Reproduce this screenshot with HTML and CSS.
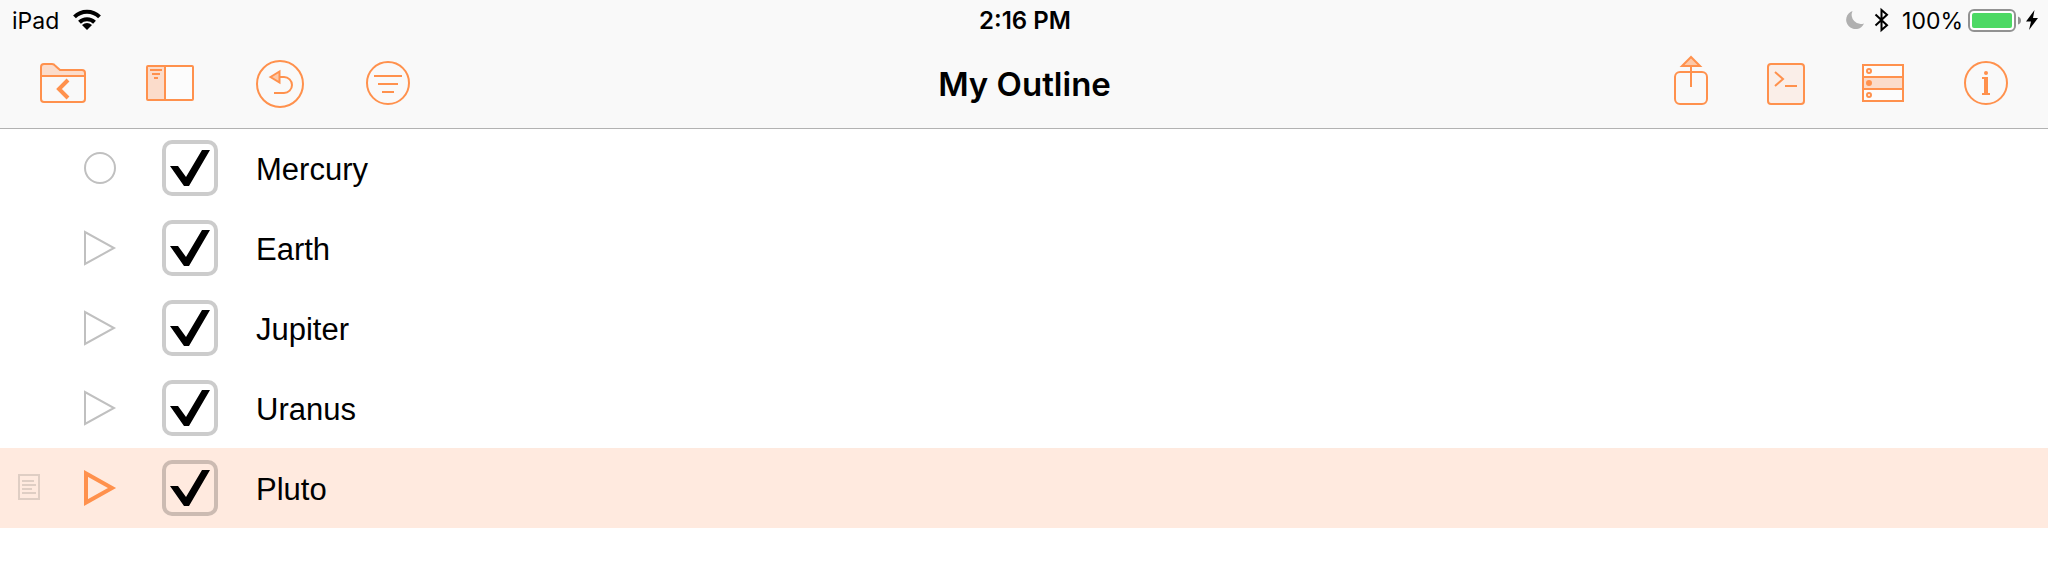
FILE: index.html
```html
<!DOCTYPE html>
<html lang="en">
<head>
<meta charset="utf-8">
<title>My Outline</title>
<link rel="stylesheet" href="styles.css">
</head>
<body>
<header class="header">
  <div class="status">
    <div class="status-left">
      <span>iPad</span>
      <svg class="wifi" width="28" height="20" viewBox="0 0 28 20" aria-hidden="true">
        <path d="M1.5 6.8A17.8 17.8 0 0 1 26.500 6.800M6.500 12.200A10.700 10.700 0 0 1 21.500 12.200" fill="none" stroke="#000" stroke-width="4"/>
        <path d="M14 20 9 15Q14 11 19 15Z"/>
      </svg>
    </div>
    <div class="status-time">2:16 PM</div>
    <div class="status-right">
      <svg class="moon" width="18" height="18" viewBox="0 0 18 18" aria-hidden="true"><path d="M6.500 0A9.300 9.300 0 1 0 18 12.500 9.300 9.300 0 0 1 6.500 0Z" fill="#b0b0b0"/></svg>
      <svg class="bluetooth" width="16" height="24" viewBox="0 0 16 24" aria-hidden="true"><path d="M1.500 6.500 13 17.200 7.500 22V2L13 6.800 1.500 17.500" fill="none" stroke="#000" stroke-width="2"/></svg>
      <span>100%</span>
      <svg class="battery" width="54" height="24" viewBox="0 0 54 24" aria-hidden="true">
        <rect x="1" y="1" width="46" height="21" rx="5" fill="#fff" stroke="#929292" stroke-width="2"/>
        <rect x="4" y="4" width="40" height="15" rx="2" fill="#4cd964"/>
        <path d="M50 7.500Q53 8.500 53 11.500T50 15.500Z" fill="#929292"/>
      </svg>
      <svg class="bolt" width="12" height="20" viewBox="0 0 12 20" aria-hidden="true"><path d="M8.500 0 0 11.500H5L3 20 12 8H7Z"/></svg>
    </div>
  </div>
  <div class="toolbar">
    <div class="tools tools-left">
      <button class="tool" type="button" aria-label="Documents">
        <svg viewBox="0 0 56 56" aria-hidden="true">
          <path class="tint" d="M6 22V13Q6 10 9 10H17Q19 10 20.500 12L25 16H47Q50 16 50 19V22Z"/>
          <path d="M6 22V13Q6 10 9 10H17Q19 10 20.500 12L25 16H47Q50 16 50 19V45Q50 48 47 48H9Q6 48 6 45ZM6 22H50"/>
          <path class="thick" d="M33 26 24 35 33 44"/>
        </svg>
      </button>
      <button class="tool" type="button" aria-label="Sidebar">
        <svg viewBox="0 0 56 56" aria-hidden="true">
          <path class="white" d="M22 12H50V46H22Z"/><path class="tint" d="M4 12H22V46H4Z"/>
          <rect x="4" y="12" width="46" height="34" rx="1"/><path d="M22 12V46M7 16H19M9 20H17M11 24H15"/>
        </svg>
      </button>
      <button class="tool" type="button" aria-label="Undo">
        <svg viewBox="0 0 56 56" aria-hidden="true">
          <circle cx="29" cy="30" r="23"/><path d="M28 23H33A8 8 0 0 1 33 39H23"/>
          <path class="tint-line" d="M19.500 23 28.500 17.500V28.500Z"/>
        </svg>
      </button>
      <button class="tool" type="button" aria-label="Filter">
        <svg viewBox="0 0 56 56" aria-hidden="true">
          <circle cx="29" cy="29" r="21"/><path d="M15 22H43M19 30H39M23 38H35"/>
        </svg>
      </button>
    </div>
    <h1 class="title">My Outline</h1>
    <div class="tools tools-right">
      <button class="tool" type="button" aria-label="Share">
        <svg viewBox="0 0 56 56" aria-hidden="true">
          <rect x="11" y="18" width="32" height="32" rx="5"/><path d="M27 12V33"/>
          <path class="tint-line" d="M27 3 18 12H36Z"/>
        </svg>
      </button>
      <button class="tool" type="button" aria-label="Console">
        <svg viewBox="0 0 56 56" aria-hidden="true">
          <rect class="pale" x="6" y="10" width="36" height="40" rx="3"/>
          <path d="M13 18 21 25 13 32M23 32H35"/>
        </svg>
      </button>
      <button class="tool" type="button" aria-label="View">
        <svg viewBox="0 0 56 56" aria-hidden="true">
          <path class="white" d="M3 11H43V47H3Z"/><path class="tint" d="M3 23H43V35H3Z"/>
          <path d="M3 11H43V47H3ZM3 23H43M3 35H43"/>
          <circle cx="9" cy="17" r="2"/><circle class="solid" cx="9" cy="29" r="2"/><circle cx="9" cy="41" r="2"/>
        </svg>
      </button>
      <button class="tool" type="button" aria-label="Inspector">
        <svg viewBox="0 0 56 56" aria-hidden="true">
          <circle cx="28" cy="29" r="21"/>
          <circle class="fill" cx="28" cy="19" r="2"/>
          <path class="fill" d="M24 23H30V39H32V41H24V39H26V25H24Z"/>
        </svg>
      </button>
    </div>
  </div>
</header>
<main>
  <ul class="outline">
    <li class="row">
      <span class="note"></span>
      <button class="handle" type="button" aria-label="Mercury row"><svg viewBox="0 0 32 36" aria-hidden="true"><circle cx="16" cy="18" r="15"/></svg></button>
      <input class="check" type="checkbox" id="mercury" checked>
      <label class="name" for="mercury">Mercury</label>
    </li>
    <li class="row">
      <span class="note"></span>
      <button class="handle" type="button" aria-label="Expand Earth"><svg viewBox="0 0 32 36" aria-hidden="true"><path d="M1 2V34L30 18Z"/></svg></button>
      <input class="check" type="checkbox" id="earth" checked>
      <label class="name" for="earth">Earth</label>
    </li>
    <li class="row">
      <span class="note"></span>
      <button class="handle" type="button" aria-label="Expand Jupiter"><svg viewBox="0 0 32 36" aria-hidden="true"><path d="M1 2V34L30 18Z"/></svg></button>
      <input class="check" type="checkbox" id="jupiter" checked>
      <label class="name" for="jupiter">Jupiter</label>
    </li>
    <li class="row">
      <span class="note"></span>
      <button class="handle" type="button" aria-label="Expand Uranus"><svg viewBox="0 0 32 36" aria-hidden="true"><path d="M1 2V34L30 18Z"/></svg></button>
      <input class="check" type="checkbox" id="uranus" checked>
      <label class="name" for="uranus">Uranus</label>
    </li>
    <li class="row selected">
      <button class="note" type="button" aria-label="Note"><svg viewBox="0 0 22 28" aria-hidden="true"><path d="M1 1H21V25H1ZM4 7H16M4 11H18M4 15H14M4 19H18"/></svg></button>
      <button class="handle" type="button" aria-label="Expand Pluto"><svg viewBox="0 0 32 36" aria-hidden="true"><path d="M2 3.400V32.600L28 18Z"/></svg></button>
      <input class="check" type="checkbox" id="pluto" checked>
      <label class="name" for="pluto">Pluto</label>
    </li>
  </ul>
</main>
</body>
</html>
```
FILE: styles.css
```css
* { box-sizing: border-box; }
body { margin: 0; background: #fff; color: #000; font-family: "Liberation Sans", Arial, sans-serif; }
button { padding: 0; border: 0; background: none; }
svg { display: block; flex: none; overflow: visible; }

.header { background: #f9f9f9; box-shadow: 0 1px 0 #b2b2b2; font-family: Inter, Roboto, sans-serif; }

.status { display: grid; grid-template-columns: 1fr auto 1fr; height: 36px; padding: 6px 10px 0 12px; font-size: 23px; line-height: 30px; }
.status-left, .status-right { display: flex; align-items: flex-start; }
.status-right { justify-content: flex-end; }
.status-time { font-size: 24px; font-weight: 600; }
.wifi { margin: 4px 0 0 14px; }
.moon { margin: 5px 10px 0 0; }
.bluetooth { margin: 2px 12px 0 0; }
.battery { margin: 3px 0 0 5px; }
.bolt { margin: 4px 0 0 4px; }

.toolbar { display: grid; grid-template-columns: 1fr auto 1fr; align-items: center; height: 92px; padding: 0 34px 0 35px; }
.title { margin: 0; padding-top: 4px; font-size: 33px; line-height: 40px; font-weight: 600; }
.tools { display: flex; }
.tools-left { gap: 52px; }
.tools-right { gap: 42px; justify-content: flex-end; }
.tool { width: 56px; height: 56px; }
.tool svg { fill: none; stroke: #ff914d; stroke-width: 2; }
.tool .tint { fill: #fbdccb; stroke: none; }
.tool .tint-line { fill: #fcc8a8; }
.tool .pale { fill: #faeee8; }
.tool .white { fill: #fcfcfc; stroke: none; }
.tool .thick { stroke-width: 4; }
.tool .solid { fill: #ff914d; }
.tool .fill { fill: #ff914d; stroke: none; }

.outline { margin: 0; padding: 0; list-style: none; }
.row { display: flex; align-items: center; height: 80px; padding-left: 18px; }
.note { width: 22px; height: 28px; margin-right: 44px; }
.note svg { fill: none; stroke: #dfcec4; stroke-width: 2; }
.handle { width: 32px; height: 36px; margin-right: 46px; }
.handle svg { fill: none; stroke: #c0c0c0; stroke-width: 2; }
.check { appearance: none; flex: none; width: 56px; height: 56px; margin: 0 38px 0 0; border: 4px solid rgba(0, 0, 0, .2); border-radius: 10px; }
.check:checked::before { content: ""; display: block; width: 48px; height: 48px; background: #000; clip-path: polygon(4px 22px, 12px 22px, 20px 33px, 36px 6px, 44px 6px, 23px 42px, 18px 42px); }
.name { flex: 1; padding-top: 4px; font-size: 31px; line-height: 40px; }
.selected { background: #ffeadf; }
.selected .handle svg { stroke: #ff914d; stroke-width: 4; }
```
